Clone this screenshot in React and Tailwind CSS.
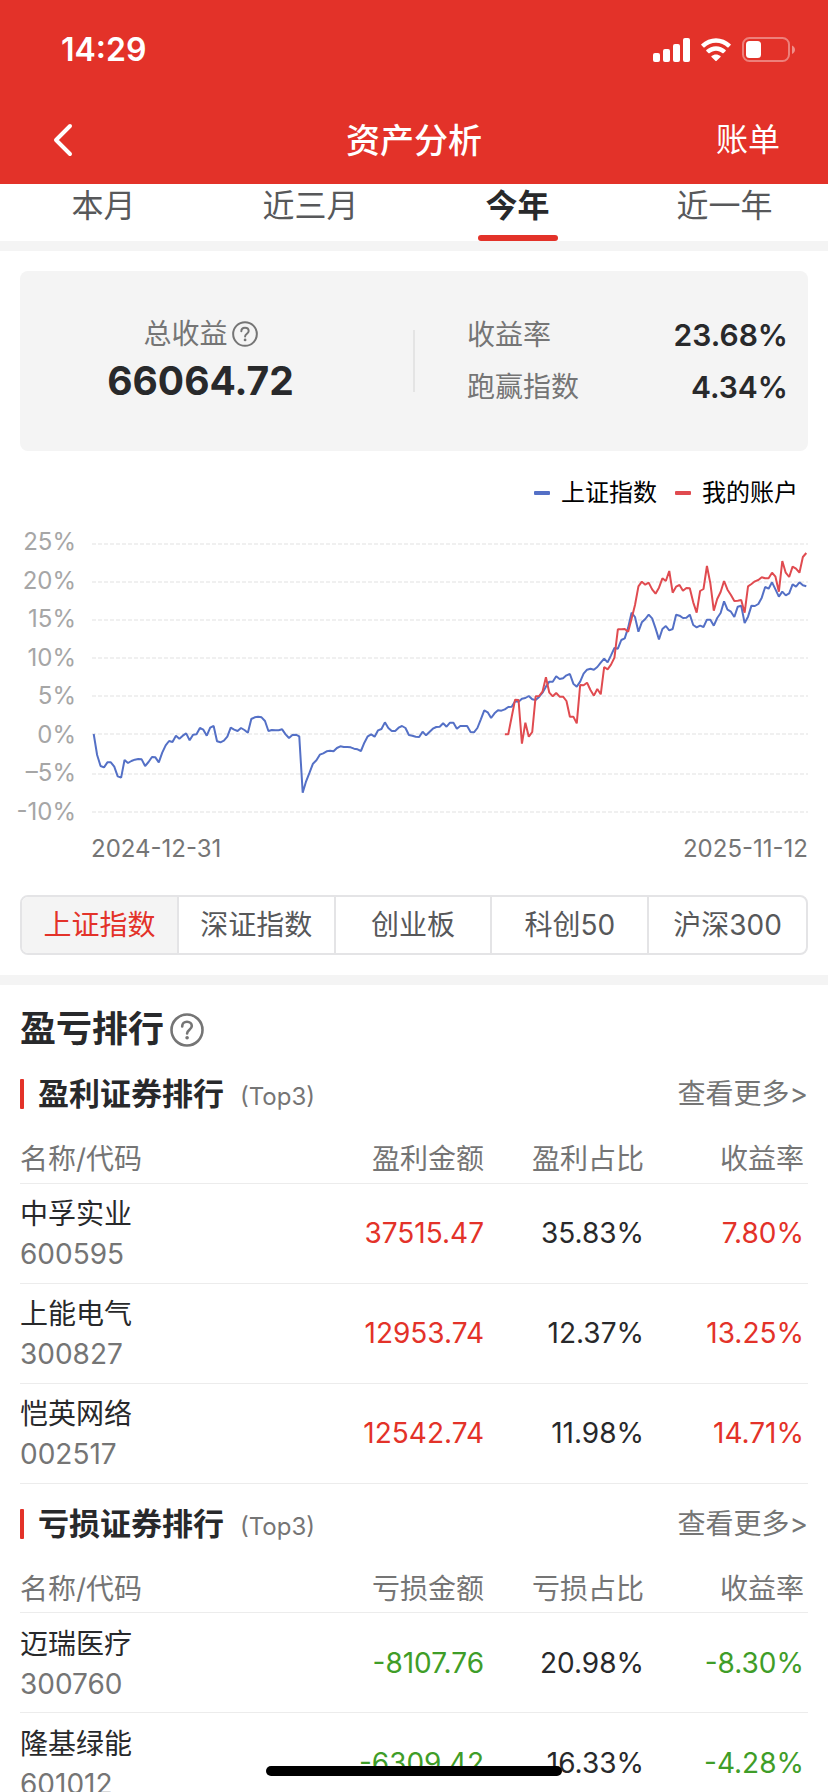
import React from "react";

const INDEX_LINE = [
  642, 705, 738, 742, 727, 727, 740, 769, 773, 720, 729, 723, 719, 717, 718, 738, 726, 711, 712, 727,
  698, 676, 663, 666, 647, 656, 647, 640, 661, 644, 643, 624, 629, 647, 623, 618, 664, 667, 662, 650,
  623, 629, 633, 624, 630, 638, 597, 592, 590, 592, 603, 633, 630, 631, 631, 628, 643, 654, 645, 644,
  649, 818, 784, 758, 731, 721, 704, 700, 694, 692, 694, 684, 679, 681, 681, 682, 686, 688, 693, 668,
  649, 643, 650, 631, 627, 607, 624, 633, 633, 623, 618, 624, 645, 647, 650, 651, 635, 646, 636, 626,
  621, 620, 610, 620, 608, 608, 626, 618, 618, 618, 636, 637, 624, 598, 571, 577, 594, 580, 571, 572,
  568, 561, 560, 544, 545, 536, 534, 528, 538, 540, 531, 518, 500, 485, 485, 469, 477, 475, 466, 462,
  491, 500, 485, 461, 449, 446, 449, 441, 428, 416, 427, 406, 384, 386, 360, 355, 323, 278, 291, 335,
  307, 297, 284, 295, 325, 358, 327, 318, 331, 327, 284, 287, 294, 293, 284, 315, 322, 317, 321, 299,
  299, 317, 294, 279, 244, 269, 275, 291, 260, 257, 309, 290, 257, 258, 252, 233, 201, 206, 187, 208,
  230, 215, 226, 220, 193, 200, 187, 196, 199,
];
const ACCOUNT_START = 120;
const ACCOUNT_LINE = [
  643, 643, 591, 539, 540, 671, 608, 650, 636, 529, 528, 515, 472, 518, 529, 519, 530, 530, 543, 590,
  590, 610, 495, 496, 488, 510, 527, 507, 523, 441, 448, 434, 413, 328, 328, 327, 335, 296, 255, 199,
  185, 194, 188, 208, 221, 203, 175, 183, 153, 218, 200, 195, 212, 204, 205, 247, 278, 213, 207, 138,
  190, 272, 237, 216, 183, 209, 225, 243, 242, 240, 278, 199, 192, 184, 180, 172, 175, 175, 158, 170,
  215, 123, 158, 171, 140, 146, 158, 111, 99,
];
const GRID_LINES = [72, 186, 300, 414, 528, 642, 762, 876];
const AXIS_LABELS = ["25%", "20%", "15%", "10%", "5%", "0%", "–5%", "-10%"];

const BAND = 2148 / 209;
const toPoints = (values, start = 0) =>
  values.map((v, i) => `${((start + i + 0.5) * BAND).toFixed(1)},${v}`).join(" ");

const PERIODS = ["本月", "近三月", "今年", "近一年"];
const INDICES = ["上证指数", "深证指数", "创业板", "科创50", "沪深300"];

const PROFITS = [
  ["中孚实业", "600595", "37515.47", "35.83%", "7.80%"],
  ["上能电气", "300827", "12953.74", "12.37%", "13.25%"],
  ["恺英网络", "002517", "12542.74", "11.98%", "14.71%"],
];
const LOSSES = [
  ["迈瑞医疗", "300760", "-8107.76", "20.98%", "-8.30%"],
  ["隆基绿能", "601012", "-6309.42", "16.33%", "-4.28%"],
];

function HelpIcon({ className }) {
  return (
    <svg viewBox="0 0 34 34" className={className} fill="none" stroke="currentColor" aria-hidden="true">
      <circle cx="17" cy="17" r="15.5" strokeWidth="2.6" />
      <path d="M12.2 13.400c0-2.800 2-4.600 4.800-4.600s4.800 1.700 4.800 4.300c0 3.500-4.700 3.700-4.700 7.300" strokeWidth="2.6" strokeLinecap="round" />
      <circle cx="17.1" cy="24.700" r="1.8" fill="currentColor" stroke="none" />
    </svg>
  );
}

function StatusBar() {
  return (
    <div className="flex h-[100px] items-center justify-between pr-[33px] pl-[61px]">
      <span className="text-[32px] leading-10 font-semibold">14:29</span>
      <div className="flex items-center gap-[10px]">
        <svg viewBox="0 0 37 24" className="h-6 w-[37px]" fill="currentColor" aria-hidden="true">
          <rect x="0" y="15" width="7" height="9" rx="2" />
          <rect x="10" y="11" width="7" height="13" rx="2" />
          <rect x="20" y="6" width="7" height="18" rx="2" />
          <rect x="30" y="0" width="7" height="24" rx="2" />
        </svg>
        <svg viewBox="0 0 32 24" className="h-6 w-8" fill="currentColor" aria-hidden="true">
          <path d="M16 4.700c4.400 0 8.500 1.700 11.600 4.700.2.200.6.200.8 0l2.300-2.300c.3-.3.300-.7 0-.9C22.500-1.900 9.500-1.900 1.300 6.200c-.3.200-.3.600 0 .9l2.300 2.300c.2.200.6.200.8 0C7.500 6.400 11.600 4.700 16 4.700z" />
          <path d="M16 12.700c2.400 0 4.700.9 6.500 2.500.2.200.6.200.9 0l2.300-2.300c.2-.3.200-.7 0-.9-5.500-5.100-13.900-5.100-19.400 0-.2.200-.2.600 0 .9l2.300 2.300c.3.200.7.200.9 0 1.800-1.600 4.100-2.500 6.500-2.500z" />
          <path d="M20.500 19c.3-.3.300-.7 0-.9-2.600-2.200-6.400-2.200-9 0-.3.200-.3.600 0 .9l4.100 4.100c.2.200.6.200.8 0z" />
        </svg>
        <svg viewBox="0 0 53 26" className="h-[26px] w-[53px]" aria-hidden="true">
          <rect x="1" y="1" width="46" height="23" rx="6.500" fill="none" stroke="#fff" strokeOpacity="0.38" strokeWidth="2" />
          <rect x="4" y="4" width="15" height="17" rx="3.500" fill="#fff" />
          <path d="M50 8.500v8.500c1.800-.8 3-2.400 3-4.200s-1.200-3.500-3-4.300z" fill="#fff" fillOpacity="0.45" />
        </svg>
      </div>
    </div>
  );
}

function SummaryRow({ label, value }) {
  return (
    <div className="flex items-center justify-between">
      <dt className="text-[28px] leading-[52px] text-[#757575]">{label}</dt>
      <dd className="text-[30px] leading-[52px] font-semibold">{value}</dd>
    </div>
  );
}

function ReturnChart() {
  return (
    <div className="mt-[22px]">
      <div className="flex items-center justify-end gap-[18px] pr-[10px] text-2xl leading-10 text-black">
        <span className="flex items-center gap-[11px]">
          <i className="h-1 w-4 rounded-[1px] bg-[#5470c6]" />
          上证指数
        </span>
        <span className="flex items-center gap-[11px]">
          <i className="h-1 w-4 rounded-[1px] bg-[#e04b50]" />
          我的账户
        </span>
      </div>
      <div className="mt-[10px] flex h-[308px] gap-4">
        <ul className="flex w-14 flex-col items-end justify-between text-2xl leading-[38px] text-[#a6a6a6]">
          {AXIS_LABELS.map((label) => (
            <li key={label} className="whitespace-nowrap">{label}</li>
          ))}
        </ul>
        <svg
          viewBox="0 9 2148 924"
          preserveAspectRatio="none"
          className="h-full min-w-0 flex-1"
          fill="none"
          role="img"
          aria-label="收益率走势"
        >
          {GRID_LINES.map((y) => (
            <line key={y} x1="0" x2="2148" y1={y} y2={y} stroke="#f0f0f0" strokeWidth="6" strokeDasharray="12 6" />
          ))}
          <polyline points={toPoints(INDEX_LINE)} stroke="#5470c6" strokeWidth="6" strokeLinejoin="bevel" />
          <polyline
            points={toPoints(ACCOUNT_LINE, ACCOUNT_START)}
            stroke="#e04b50"
            strokeWidth="6"
            strokeLinejoin="bevel"
          />
        </svg>
      </div>
      <div className="flex justify-between pl-[71px] text-2xl leading-9 text-[#757575]">
        <time dateTime="2024-12-31">2024-12-31</time>
        <time dateTime="2025-11-12">2025-11-12</time>
      </div>
    </div>
  );
}

function Ranking({ title, columns, rows, tone }) {
  return (
    <section>
      <div className="flex items-center justify-between pt-[14px]">
        <div className="flex items-center">
          <span className="h-[30px] w-1 rounded-[1px] bg-[#e33229]" />
          <h3 className="ml-[14px] text-[31px] leading-[52px] font-bold">{title}</h3>
          <span className="ml-4 pt-[6px] text-2xl text-[#757575]">(Top3)</span>
        </div>
        <a href="#more" className="text-[28px] leading-[52px] text-[#757575]">查看更多&gt;</a>
      </div>
      <table className="w-full table-fixed text-right text-[28px]">
        <colgroup>
          <col />
          <col className="w-[200px]" />
          <col className="w-[160px]" />
          <col className="w-[164px]" />
        </colgroup>
        <thead className="text-[#757575]">
          <tr className="h-[63px] border-b border-[#ececec]">
            {columns.map((name, i) => (
              <th
                key={name}
                scope="col"
                className={`pt-4 leading-10 font-normal ${i === 0 ? "text-left" : i === 3 ? "pr-1" : ""}`}
              >
                {name}
              </th>
            ))}
          </tr>
        </thead>
        <tbody>
          {rows.map(([name, code, amount, share, rate]) => (
            <tr key={code} className="h-[100px] border-b border-[#ececec]">
              <td className="pt-[2px] text-left leading-10">
                <div>{name}</div>
                <div className="text-[#757575]">{code}</div>
              </td>
              <td className={tone}>{amount}</td>
              <td>{share}</td>
              <td className={`pr-1 ${tone}`}>{rate}</td>
            </tr>
          ))}
        </tbody>
      </table>
    </section>
  );
}

export default function App() {
  return (
    <div className="h-screen overflow-hidden bg-white font-[Inter,'Noto_Sans_CJK_SC',sans-serif] text-[#28292b]">
      <header className="bg-[#e33229] text-white">
        <StatusBar />
        <div className="grid h-[84px] grid-cols-3 items-center px-12 pb-1">
          <button type="button" aria-label="返回" className="justify-self-start">
            <svg viewBox="0 0 26 34" className="h-[34px] w-[26px]" fill="none" stroke="currentColor" strokeWidth="4" aria-hidden="true">
              <path d="M22 3 8 17l14 14" strokeLinecap="round" strokeLinejoin="round" />
            </svg>
          </button>
          <h1 className="justify-self-center text-[34px] font-medium">资产分析</h1>
          <button type="button" className="justify-self-end text-[32px]">账单</button>
        </div>
      </header>

      <nav className="grid h-[57px] grid-cols-4 text-[32px] leading-[44px]">
        {PERIODS.map((name) => (
          <button
            key={name}
            type="button"
            className={`flex flex-col items-center justify-between whitespace-nowrap ${name === "今年" ? "font-bold" : "text-[#57585a]"}`}
          >
            {name}
            {name === "今年" && <span className="h-[6px] w-20 rounded-[3px] bg-[#e33229]" />}
          </button>
        ))}
      </nav>

      <main>
        <div className="h-[10px] bg-[#f4f4f4]" />
        <section className="p-5">
          <div className="grid h-[180px] grid-cols-[1fr_2px_1fr] items-center rounded-lg bg-[#f4f4f4]">
            <div className="flex flex-col items-center pr-8">
              <div className="flex items-center gap-1 text-[28px] leading-10 text-[#757575]">
                总收益
                <HelpIcon className="size-[26px]" />
              </div>
              <strong className="text-[39px] leading-[54px] font-bold">66064.72</strong>
            </div>
            <span className="h-[62px] bg-[#e4e4e4]" />
            <dl className="pr-5 pl-[52px]">
              <SummaryRow label="收益率" value="23.68%" />
              <SummaryRow label="跑赢指数" value="4.34%" />
            </dl>
          </div>

          <ReturnChart />

          <div className="mt-7 grid h-[60px] grid-cols-5 divide-x-2 divide-[#e4e4e6] overflow-hidden rounded-lg border-2 border-[#e4e4e6] text-[28px]">
            {INDICES.map((name, i) => (
              <button
                key={name}
                type="button"
                className={`whitespace-nowrap ${i === 0 ? "bg-[#f4f4f4] text-[#e33229]" : "text-[#57585a]"}`}
              >
                {name}
              </button>
            ))}
          </div>
        </section>

        <div className="h-[10px] bg-[#f4f4f4]" />
        <section className="px-5 pt-5">
          <h2 className="flex items-center gap-[6px] text-4xl leading-[49px] font-bold">
            盈亏排行
            <HelpIcon className="size-[34px] text-[#757575]" />
          </h2>
          <Ranking
            title="盈利证券排行"
            columns={["名称/代码", "盈利金额", "盈利占比", "收益率"]}
            rows={PROFITS}
            tone="text-[#e33229]"
          />
          <Ranking
            title="亏损证券排行"
            columns={["名称/代码", "亏损金额", "亏损占比", "收益率"]}
            rows={LOSSES}
            tone="text-[#3f9d28]"
          />
        </section>
      </main>

      <div className="fixed bottom-4 left-1/2 h-[10px] w-[296px] -translate-x-1/2 rounded-full bg-black" />
    </div>
  );
}
